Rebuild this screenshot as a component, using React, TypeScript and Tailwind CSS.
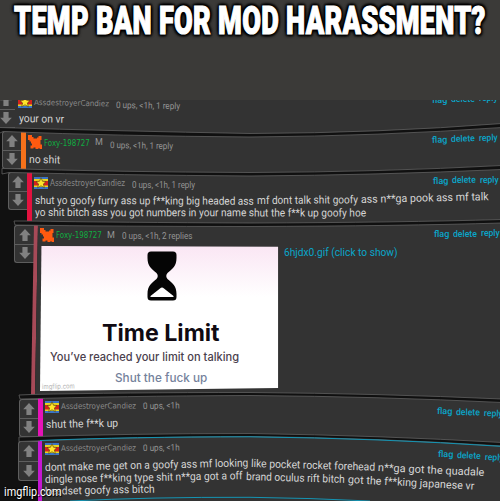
import { ReactNode, useLayoutEffect, useRef, useState } from "react";
import clsx from "clsx";

// Squeezes one line of text to the width of its box
const Fit = ({ className, children }: { className: string; children: ReactNode }) => {
  const box = useRef<HTMLDivElement>(null);
  const text = useRef<HTMLSpanElement>(null);
  const [scale, setScale] = useState(1);

  useLayoutEffect(() => {
    if (box.current && text.current) {
      setScale(box.current.clientWidth / text.current.offsetWidth);
    }
  }, []);

  return (
    <div ref={box} className={clsx("shrink-0 origin-left", className)}>
      <span
        ref={text}
        className="inline-block origin-left whitespace-nowrap align-top"
        style={{ transform: `scaleX(${scale})` }}
      >
        {children}
      </span>
    </div>
  );
};

const Arrow = ({ down }: { down?: boolean }) => (
  <svg viewBox="0 0 12 12" className={clsx("h-3 w-3 fill-[#818181]", down && "rotate-180")}>
    <path d="M6 0 L11.8 6.2 H8.6 V12 H3.4 V6.2 H0.2 Z" />
  </svg>
);

const Votes = ({ className }: { className?: string }) => (
  <div
    className={clsx(
      "flex h-[38px] shrink-0 flex-col rounded-l-[3px] border border-r-0 border-[#5e5e5e] bg-[#333]",
      className
    )}
  >
    <div className="flex flex-1 items-center justify-center border-b border-[#5e5e5e]">
      <Arrow />
    </div>
    <div className="flex flex-1 items-center justify-center">
      <Arrow down />
    </div>
  </div>
);

const StarIcon = () => (
  <svg viewBox="0 0 14 12" className="h-3 w-3.5 shrink-0">
    <path fill="#3b74c4" d="M0 0H14V12H0Z" />
    <path fill="#e9d51f" d="M0 2H14V10H0Z" />
    <path fill="#d3231c" d="M0 4H14V8.5H0Z" />
    <path
      fill="#ffe52b"
      stroke="#4a3a10"
      strokeWidth="0.6"
      d="M7 0.8 L8.5 4.2 L12 4.5 L9.4 6.9 L10.4 10.8 L7 8.8 L3.6 10.8 L4.6 6.9 L2 4.5 L5.5 4.2 Z"
    />
  </svg>
);

const FoxIcon = () => (
  <svg viewBox="0 0 14 14" className="h-3.5 w-3.5 shrink-0 fill-[#ff5a10]">
    <path d="M0 0H4V2H5.5V3.5H9V2.5H10.5V1H13.5V5H12.5V9.5H14V14H11.5V13H10.5V14H7.5V12.5H5.5V13.5H2.5V10.5H4V8.5H3V6.5H1.5V5H0Z" />
  </svg>
);

type LinkProps = { className: string; flag: string; del: string; reply: string };

const Links = ({ className, flag, del, reply }: LinkProps) => (
  <div className={clsx("absolute flex h-3 gap-1 text-[9px] leading-3 font-medium text-[#0aa6ca]", className)}>
    <Fit className={clsx("w-[15px]", flag)}>flag</Fit>
    <Fit className={clsx("w-[24px]", del)}>delete</Fit>
    <Fit className={clsx("w-[19px]", reply)}>reply</Fit>
  </div>
);

type MetaProps = { fox?: boolean; ups: string; upsClass: string; nameClass?: string };

const Meta = ({ fox, ups, upsClass, nameClass }: MetaProps) => (
  <div className="flex h-3.5 items-center text-[9px] leading-3 text-[#959595]">
    {fox ? <FoxIcon /> : <StarIcon />}
    {fox ? (
      <>
        <Fit className={clsx("ml-0.5 w-[46px] font-['DejaVu_Sans'] text-[8px] text-[#0fae41]", nameClass)}>
          Foxy-198727
        </Fit>
        <Fit className="ml-[5px] w-2">M</Fit>
      </>
    ) : (
      <Fit className={clsx("ml-0.5 w-[75px] font-['DejaVu_Sans'] text-[8px] text-[#8a8a8a]", nameClass)}>
        AssdestroyerCandiez
      </Fit>
    )}
    <Fit className={clsx("ml-[7px]", upsClass)}>{ups}</Fit>
  </div>
);

const TimeLimit = () => (
  <div className="relative h-[145px] w-[239px] bg-linear-to-b from-[#fae6f4] via-white via-35% to-white text-center [clip-path:polygon(0.6%_0,99.6%_0.5%,99.6%_98%,0_100%)]">
    <svg viewBox="0 0 30 50" className="absolute top-[5px] left-[107px] h-[50px] w-[30px]">
      <path
        fill="#050505"
        d="M4 0.5H26Q29.5 0.5 29.5 4V7C29.5 15 25.5 18 20.5 22Q18 25 20.5 28C25.5 32 29.5 35 29.5 43V46Q29.5 49.5 26 49.5H4Q0.5 49.5 0.5 46V43C0.5 35 4.5 32 9.5 28Q12 25 9.5 22C4.5 18 0.5 15 0.5 7V4Q0.5 0.5 4 0.5Z"
      />
      <path fill="#fff" d="M15 36.5Q16 36.5 17 37.5L26.5 45V46H3.5V45L13 37.5Q14 36.5 15 36.5Z" />
    </svg>
    <div className="flex flex-col items-start pt-[74px] font-[Inter]">
      <Fit className="ml-[61px] h-[26px] w-[118px] text-[23px] leading-[26px] font-bold text-[#100a12]">Time Limit</Fit>
      <Fit className="ml-[10px] mt-[3px] h-4 w-[189px] text-[11.5px] leading-4 font-medium text-[#4a404d]">
        You’ve reached your limit on talking
      </Fit>
      <Fit className="ml-[75px] mt-[5px] h-4 w-[92px] text-[12px] leading-4 font-medium text-[#75829c]">
        Shut the fuck up
      </Fit>
      <Fit className="ml-[2px] -mt-[3px] h-2 w-[33px] -rotate-1 text-[7px] leading-2 text-[#b5b5b5]">imgflip.com</Fit>
    </div>
  </div>
);

// Bent gaps between the comments
const Gaps = () => (
  <svg viewBox="0 0 500 401" className="pointer-events-none absolute inset-0 h-[401px] w-[500px]">
    <g fill="#101010" stroke="#5f5f5f" strokeWidth="0.8">
      <path d="M-2 27.5Q120 31 250 33.5Q380 33 502 23.5V27.5Q380 36 250 37Q120 36 3 31.5L-2 34Z" />
      <path d="M2 68.5Q120 72 250 72.5Q380 72 502 65.5V69.5Q380 75 250 76Q120 75 9 72.5L2 74Z" />
      <path d="M27 121Q120 122.5 250 123Q400 122.5 502 119.5V123Q400 126 250 126.5Q120 126.5 15 125L14 121Z" />
      <path d="M31 294.5Q120 292.5 250 292.5Q380 293.5 502 299V302.5Q380 296.5 250 295.5Q120 296 20 299L19 295Z" />
      <path d="M19 337Q130 333.5 250 333.5Q380 335.5 502 342.5V346Q380 338 250 336.5Q130 337 19 341.5Z" />
    </g>
    <g fill="none" stroke="#1594b3" strokeWidth="1">
      <path d="M40 340.5Q130 336.8 250 336.8Q380 338.3 502 346.4" />
      <path d="M70 401Q150 397 250 397.3Q310 398 370 401" />
    </g>
  </svg>
);

const Comments = () => (
  <div className="relative h-[401px] overflow-hidden bg-[#111] text-[11px] leading-3 text-[#d6d6d6]">
    <div className="relative flex h-[30px] bg-[#333]">
      <Votes className="-ml-[5px] -mt-[10px] w-5 border-r" />
      <div className="-mt-[5px] ml-[3px]">
        <Meta ups="0 ups, <1h, 1 reply" nameClass="mt-px rotate-1" upsClass="mt-[5px] w-16 rotate-1" />
        <Fit className="ml-px mt-1 w-[45px] rotate-1">your on vr</Fit>
      </div>
      <Links className="-top-[6px] left-[432px]" flag="" del="-mt-px" reply="-mt-0.5" />
    </div>

    <div className="relative flex h-[41px] pl-[2px]">
      <Votes className="mt-px w-[19px]" />
      <div className="w-[5px] bg-[#f5711b]" />
      <div className="flex-1 bg-[#333] pt-[5px] pl-[2px]">
        <Meta fox ups="0 ups, <1h, 1 reply" nameClass="mt-[3px]" upsClass="mt-[5px] w-[63px] rotate-1" />
        <Fit className="ml-px mt-[5px] w-[31px] rotate-1">no shit</Fit>
      </div>
      <Links className="top-1 left-[432px]" flag="-rotate-2" del="-mt-px -rotate-2" reply="-mt-0.5 -rotate-2" />
    </div>

    <div className="relative flex h-[52px] pl-2">
      <Votes className="mt-px w-[19px]" />
      <div className="w-[5px] bg-[#e3123f]" />
      <div className="flex-1 bg-[#333] pt-[5px] pl-[2px]">
        <Meta ups="0 ups, <1h, 1 reply" nameClass="mt-px" upsClass="mt-[3px] w-[63px]" />
        <div className="mt-[5px] ml-px flex gap-[3px]">
          <Fit className="w-[219px] rotate-[0.2deg]">shut yo goofy furry ass up f**king big headed ass</Fit>
          <Fit className="w-[101px] rotate-[-0.4deg]">mf dont talk shit goofy</Fit>
          <Fit className="-mt-px w-[128px] rotate-[-1.3deg]">ass n**ga pook ass mf talk</Fit>
        </div>
        <Fit className="ml-px w-[331px] rotate-[0.1deg]">
          yo shit bitch ass you got numbers in your name shut the f**k up goofy hoe
        </Fit>
      </div>
      <Links className="top-1 left-[433px]" flag="-rotate-1" del="-mt-px -rotate-1" reply="-mt-px -rotate-1" />
    </div>

    <div className="relative flex h-[173px] pl-3.5">
      <Votes className="mt-[2px] w-[20px]" />
      <div className="-ml-[3px] w-[7px] bg-[#a74a58] [clip-path:polygon(43%_0,100%_0,57%_100%,0_100%)]" />
      <div className="-ml-[3px] flex-1 bg-[#333] pt-[5px] pl-[5px] [clip-path:polygon(3px_0,100%_0,100%_100%,0_100%)]">
        <Meta fox ups="0 ups, <1h, 2 replies" nameClass="mt-px" upsClass="mt-[2px] w-[70px]" />
        <div className="mt-1 flex">
          <TimeLimit />
          <Fit className="mt-px ml-[5px] w-[114px] text-[#0aa6ca]">6hjdx0.gif (click to show)</Fit>
        </div>
      </div>
      <Links className="top-[5px] left-[434px]" flag="" del="" reply="-mt-px" />
    </div>

    <div className="relative flex h-[43px] pl-[19px]">
      <Votes className="mt-[3px] w-[19px]" />
      <div className="w-[5px] bg-[#e613b8]" />
      <div className="flex-1 bg-[#333] pt-1 pl-[2px]">
        <Meta ups="0 ups, <1h" nameClass="rotate-[-0.5deg]" upsClass="-mt-[2px] w-[37px] -rotate-1" />
        <Fit className="ml-px mt-[5px] w-[72px] -rotate-1">shut the f**k up</Fit>
      </div>
      <Links className="top-[9px] left-[437px]" flag="rotate-1" del="mt-px rotate-1" reply="mt-0.5 rotate-2" />
    </div>

    <div className="relative flex h-[62px] pl-[18px]">
      <Votes className="mt-[2px] h-[40px] w-5" />
      <div className="w-1 bg-[#c417d2]" />
      <div className="flex-1 bg-[#333] pt-[3px] pl-[3px]">
        <Meta ups="0 ups, <1h" nameClass="rotate-[-0.5deg]" upsClass="-mt-[3px] w-[37px] -rotate-1" />
        <div className="mt-1 flex h-[13px] gap-[3px]">
          <Fit className="mt-0.5 w-[203px] rotate-[-1.3deg]">dont make me get on a goofy ass mf looking</Fit>
          <Fit className="-mt-[2px] w-[124px] rotate-[1.7deg]">like pocket rocket forehead</Fit>
          <Fit className="mt-[2px] w-[106px] rotate-[2.7deg]">n**ga got the quadale</Fit>
        </div>
        <div className="flex h-3 gap-[3px]">
          <Fit className="mt-[1px] w-[198px] rotate-[-1.1deg]">dingle nose f**king type shit n**ga got a off</Fit>
          <Fit className="-mt-[2px] w-[99px] rotate-[1.7deg]">brand oculus rift bitch</Fit>
          <Fit className="mt-[1px] w-[127px] rotate-[3deg]">got the f**king japanese vr</Fit>
        </div>
        <Fit className="mt-px w-[110px] rotate-[-1.3deg]">headset goofy ass bitch</Fit>
      </div>
      <Links className="top-[9px] left-[438px]" flag="rotate-1" del="mt-px rotate-2" reply="mt-[3px] rotate-2" />
    </div>

    <Gaps />
  </div>
);

const App = () => {
  return (
    <div className="relative h-[501px] w-[500px] overflow-hidden bg-[#3b3a38] font-[Roboto,sans-serif]">
      <div className="h-[100px] pl-[14px]">
        <Fit className="h-[42px] w-[472px] text-[38px] leading-[42px] font-black tracking-[0.4px] text-white [-webkit-text-stroke:1.2px_white] [text-shadow:0_0_3px_#000,0_0_3px_#000,0_0_5px_#000,2px_2px_3px_#000,-2px_-2px_3px_#000,2px_-2px_3px_#000,-2px_2px_3px_#000]">
          TEMP BAN FOR MOD HARASSMENT?
        </Fit>
      </div>
      <Comments />
      <Fit className="absolute bottom-0 left-1 h-[18px] w-[57px] text-[12px] leading-[18px] text-white [text-shadow:0_0_2px_#000,1px_1px_1px_#000]">
        imgflip.com
      </Fit>
    </div>
  );
};

export default App;
